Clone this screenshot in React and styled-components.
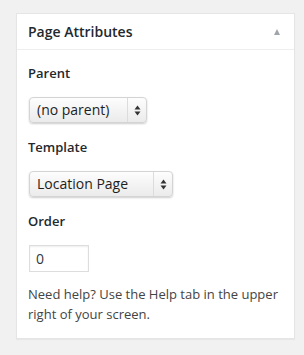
import React from "react";
import styled, { createGlobalStyle } from "styled-components";

const Global = createGlobalStyle`
  html, body { margin: 0; padding: 0; background: #f1f1f1; }
  body { font-family: "Open Sans", "Noto Sans", sans-serif; }
`;

const Page = styled.div`
  padding: 13px 9px 18px 16px;
`;

const Postbox = styled.div`
  width: 279px;
  box-sizing: border-box;
  background: #fff;
  border: 1px solid #e5e5e5;
  box-shadow: 0 1px 1px rgba(0, 0, 0, 0.04);
`;

const Header = styled.div`
  height: 35px;
  border-bottom: 1px solid #eee;
  display: flex;
  align-items: center;
  justify-content: space-between;
  padding: 0 14px 0 11px;
`;

const Title = styled.h3`
  margin: 0;
  font-size: 14px;
  font-weight: 600;
  color: #23282d;
  line-height: 20px;
  padding-top: 1px;
`;

const Toggle = styled.span`
  width: 0;
  height: 0;
  border-left: 3.5px solid transparent;
  border-right: 3.5px solid transparent;
  border-bottom: 6px solid #a0a5aa;
  margin-top: 1px;
`;

const Inside = styled.div`
  padding: 0 11px 14px 11px;
  display: flex;
  flex-direction: column;
  align-items: flex-start;
`;

const Label = styled.div`
  font-size: 13px;
  font-weight: 600;
  line-height: 18px;
  color: #23282d;
  margin-top: ${(p) => p.$top}px;
`;

const SelectBox = styled.div`
  margin: 15px 0 0 1px;
  width: ${(p) => p.$width}px;
  height: 26px;
  box-sizing: border-box;
  display: flex;
  align-items: stretch;
  border: 1px solid #d4d4d4;
  border-radius: 4px;
  background: linear-gradient(#fdfdfd, #ebebeb);
  box-shadow: 0 1px 2px rgba(0, 0, 0, 0.2);
`;

const SelectValue = styled.span`
  flex: 1;
  padding-left: 7px;
  font-size: 14px;
  line-height: 24px;
  color: #1e1e1e;
  white-space: nowrap;
`;

const ArrowCell = styled.span`
  width: 18px;
  border-left: 1px solid #dcdcdc;
  display: flex;
  align-items: center;
  justify-content: center;
`;

const Arrows = () => (
  <svg width="7" height="11" viewBox="0 0 7 11">
    <path d="M3.5 0.5 L6.5 4.5 L0.5 4.5 Z" fill="#333" />
    <path d="M3.5 10.5 L6.5 6.5 L0.5 6.5 Z" fill="#333" />
  </svg>
);

const Select = ({ value, width }) => (
  <SelectBox $width={width}>
    <SelectValue>{value}</SelectValue>
    <ArrowCell>
      <Arrows />
    </ArrowCell>
  </SelectBox>
);

const NumberInput = styled.input`
  margin: 15px 0 0 1px;
  width: 60px;
  height: 27px;
  box-sizing: border-box;
  border: 1px solid #ddd;
  box-shadow: inset 0 1px 2px rgba(0, 0, 0, 0.07);
  padding: 0 6px;
  font-family: "Open Sans", "Noto Sans", sans-serif;
  font-size: 14px;
  color: #32373c;
  background: #fff;
  outline: none;
`;

const Help = styled.p`
  margin: 13px 0 0 0;
  font-size: 13px;
  line-height: 19.5px;
  color: #444;
`;

export default function App() {
  return (
    <Page>
      <Global />
      <Postbox>
        <Header>
          <Title>Page Attributes</Title>
          <Toggle />
        </Header>
        <Inside>
          <Label $top={14}>Parent</Label>
          <Select value="(no parent)" width={118} />
          <Label $top={15}>Template</Label>
          <Select value="Location Page" width={144} />
          <Label $top={15}>Order</Label>
          <NumberInput defaultValue="0" />
          <Help>
            Need help? Use the Help tab in the upper right of your screen.
          </Help>
        </Inside>
      </Postbox>
    </Page>
  );
}
